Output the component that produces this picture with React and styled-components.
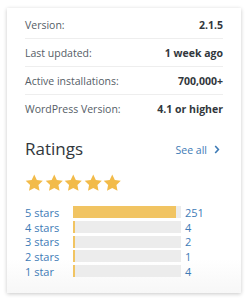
import styled, { createGlobalStyle } from 'styled-components';

const GlobalStyle = createGlobalStyle`
  html, body {
    margin: 0;
    padding: 0;
    background: #ffffff;
  }
  body {
    font-family: 'Open Sans', 'Noto Sans', sans-serif;
    -webkit-font-smoothing: antialiased;
  }
`;

const META = [
  { label: 'Version:', value: '2.1.5' },
  { label: 'Last updated:', value: '1 week ago' },
  { label: 'Active installations:', value: '700,000+' },
  { label: 'WordPress Version:', value: '4.1 or higher' },
];

const RATINGS = [
  { label: '5 stars', count: 251 },
  { label: '4 stars', count: 4 },
  { label: '3 stars', count: 2 },
  { label: '2 stars', count: 1 },
  { label: '1 star', count: 4 },
];

const TOTAL = RATINGS.reduce((sum, r) => sum + r.count, 0);

function Star() {
  return (
    <svg width="18.5" height="17.5" viewBox="0 0 24 23">
      <path
        d="M12 0.8l3.4 7.1 7.8 1.1-5.7 5.4 1.4 7.7L12 18.4l-6.9 3.7 1.4-7.7L0.8 9l7.8-1.1z"
        fill="#f2bb4a"
      />
    </svg>
  );
}

function App() {
  return (
    <Page>
      <GlobalStyle />
      <Card>
        <MetaList>
          {META.map((item) => (
            <MetaRow key={item.label}>
              <MetaLabel>{item.label}</MetaLabel>
              <MetaValue>{item.value}</MetaValue>
            </MetaRow>
          ))}
        </MetaList>

        <RatingsHeader>
          <Title>Ratings</Title>
          <SeeAll href="#">
            See all
            <svg width="6" height="9" viewBox="0 0 6 9">
              <path d="M1.2 1l3.2 3.5-3.2 3.5" fill="none" stroke="#3e7bb6" strokeWidth="1.6" />
            </svg>
          </SeeAll>
        </RatingsHeader>

        <Stars>
          {[0, 1, 2, 3, 4].map((i) => (
            <Star key={i} />
          ))}
        </Stars>

        <Bars>
          {RATINGS.map((r) => (
            <BarRow key={r.label}>
              <BarLabel>{r.label}</BarLabel>
              <Track>
                <Fill style={{ width: `${Math.max((r.count / TOTAL) * 100, 1.6)}%` }} />
              </Track>
              <Count>{r.count}</Count>
            </BarRow>
          ))}
        </Bars>
      </Card>
    </Page>
  );
}

export default App;

const Page = styled.div`
  padding: 8px 7px 7px;
`;

const Card = styled.div`
  box-sizing: border-box;
  width: 234px;
  height: 285px;
  padding: 3px 18px 0;
  background: linear-gradient(to bottom, #ffffff 88%, #f7f7f7 100%);
  box-shadow: 0 1px 4px rgba(0, 0, 0, 0.22);
`;

const MetaList = styled.ul`
  margin: 0;
  padding: 0;
  list-style: none;
`;

const MetaRow = styled.li`
  height: 28px;
  display: flex;
  justify-content: space-between;
  align-items: center;
  font-size: 10.5px;
  border-bottom: 1px solid #eeeeee;
  box-sizing: border-box;

  &:last-child {
    border-bottom: none;
  }
`;

const MetaLabel = styled.span`
  color: #555d66;
`;

const MetaValue = styled.span`
  color: #32373c;
  font-weight: 700;
`;

const RatingsHeader = styled.div`
  margin-top: 14px;
  height: 22px;
  display: flex;
  justify-content: space-between;
  align-items: center;
`;

const Title = styled.h3`
  margin: 0;
  font-size: 17px;
  font-weight: 400;
  color: #32373c;
`;

const SeeAll = styled.a`
  display: flex;
  align-items: center;
  gap: 7px;
  padding-top: 3px;
  padding-right: 3px;
  font-size: 10.5px;
  color: #3e7bb6;
  text-decoration: none;
`;

const Stars = styled.div`
  margin-top: 15px;
  display: flex;
  gap: 1px;
  height: 17.5px;
`;

const Bars = styled.div`
  margin-top: 13.5px;
  display: flex;
  flex-direction: column;
`;

const BarRow = styled.div`
  height: 14.7px;
  display: flex;
  align-items: center;
  font-size: 11px;
`;

const BarLabel = styled.span`
  width: 48px;
  color: #3e7bb6;
`;

const Track = styled.div`
  width: 108px;
  height: 12px;
  background: #ececec;
  display: flex;
`;

const Fill = styled.div`
  height: 100%;
  background: #f1c462;
`;

const Count = styled.span`
  margin-left: 4px;
  color: #3e7bb6;
`;
